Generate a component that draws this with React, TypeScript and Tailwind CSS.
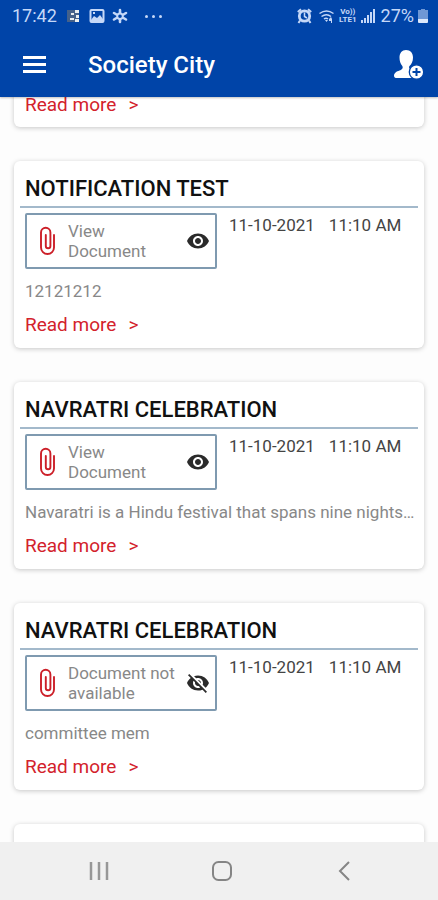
import React from "react";

type Notice = {
  title: string;
  date: string;
  time: string;
  text: string;
  hasDocument: boolean;
};

const notices: Notice[] = [
  { title: "NOTIFICATION TEST", date: "11-10-2021", time: "11:10 AM", text: "12121212", hasDocument: true },
  {
    title: "NAVRATRI CELEBRATION",
    date: "11-10-2021",
    time: "11:10 AM",
    text: "Navaratri is a Hindu festival that spans nine nights…",
    hasDocument: true,
  },
  { title: "NAVRATRI CELEBRATION", date: "11-10-2021", time: "11:10 AM", text: "committee mem", hasDocument: false },
];

const cardStyle = "bg-white shadow-[0_1px_5px_rgba(0,0,0,0.22)]";

function PaperclipIcon() {
  return (
    <svg className="h-[30px] w-[18px] shrink-0" viewBox="0 0 18 30" fill="none" stroke="#cc1f28" strokeWidth="1.900" strokeLinecap="round">
      <path d="M16 9v12.500a6.500 6.500 0 0 1-13 0V6.500a4.700 4.700 0 0 1 9.400 0v13.500a2.300 2.300 0 0 1-4.600 0V9" />
    </svg>
  );
}

function EyeIcon() {
  return (
    <svg className="size-6 shrink-0" viewBox="0 0 24 24" fill="#2b2b2b">
      <path d="M12 4.500C7 4.500 2.730 7.610 1 12c1.730 4.390 6 7.500 11 7.500s9.270-3.110 11-7.500c-1.730-4.390-6-7.500-11-7.500zM12 17c-2.760 0-5-2.240-5-5s2.240-5 5-5 5 2.240 5 5-2.240 5-5 5zm0-8c-1.660 0-3 1.340-3 3s1.340 3 3 3 3-1.340 3-3-1.340-3-3-3z" />
    </svg>
  );
}

function EyeOffIcon() {
  return (
    <svg className="size-6 shrink-0" viewBox="0 0 24 24" fill="#2b2b2b">
      <path d="M12 7c2.760 0 5 2.240 5 5 0 .65-.13 1.260-.36 1.830l2.920 2.920c1.510-1.260 2.700-2.890 3.430-4.750-1.730-4.390-6-7.500-11-7.500-1.400 0-2.740.25-3.980.7l2.160 2.160C10.740 7.130 11.350 7 12 7zM2 4.270l2.280 2.280.46.46C3.080 8.300 1.780 10.020 1 12c1.730 4.390 6 7.500 11 7.500 1.550 0 3.030-.3 4.380-.84l.42.42L19.730 22 21 20.730 3.270 3 2 4.270zM7.530 9.800l1.550 1.550c-.05.21-.08.43-.08.65 0 1.660 1.340 3 3 3 .22 0 .44-.03.65-.08l1.550 1.550c-.67.33-1.410.53-2.200.53-2.760 0-5-2.240-5-5 0-.79.2-1.530.53-2.200zm4.310-.78l3.150 3.150.02-.16c0-1.660-1.340-3-3-3l-.17.01z" />
    </svg>
  );
}

function ReadMore() {
  return (
    <a href="#" className="flex w-fit gap-3 text-[19px] leading-6 text-[#d3222c]">
      <span>Read more</span>
      <span>&gt;</span>
    </a>
  );
}

function NoticeCard({ notice }: { notice: Notice }) {
  return (
    <article className={`rounded-md px-1.5 pt-4 pb-[11px] ${cardStyle}`}>
      <h2 className="border-b-2 border-[#a3b9cb] px-[5px] pb-[5px] text-[22px] leading-6 font-medium text-[#111]">
        {notice.title}
      </h2>
      <div className="mt-[5px] flex items-start gap-3 px-[5px]">
        <button
          type="button"
          className="flex h-14 w-48 items-center rounded-xs border-2 border-[#7f9ab0] pr-[5px] pl-[11px] text-left text-[17px] leading-5 text-[#888]"
        >
          <PaperclipIcon />
          <span className="ml-3 flex-1">
            {notice.hasDocument ? "View" : "Document not"}
            <br />
            {notice.hasDocument ? "Document" : "available"}
          </span>
          {notice.hasDocument ? <EyeIcon /> : <EyeOffIcon />}
        </button>
        <p className="flex gap-3.5 pt-0.5 text-[17px] leading-5 text-[#444]">
          <span>{notice.date}</span>
          <span>{notice.time}</span>
        </p>
      </div>
      <p className="mt-3 truncate pl-[5px] text-[17px] leading-5 text-[#888]">{notice.text}</p>
      <div className="mt-3 px-[5px]">
        <ReadMore />
      </div>
    </article>
  );
}

function StatusBar() {
  return (
    <div className="flex h-8 items-center justify-between pr-2.5 pl-3 text-lg text-[#c5d8f8]">
      <div className="flex items-center">
        <span>17:42</span>
        <svg className="ml-2.5 h-4 w-[74px]" viewBox="0 0 74 16" fill="none" stroke="#c5d8f8">
          <path fill="#45618a" stroke="none" d="M0 2h12v12H0z" />
          <path fill="#e9eef0" stroke="none" d="M8 2h4v3H8zM9 7h3v3H9zM8 11h4v3H8zM4 5h3v2H4zM3 10h4v2H3z" />
          <rect x="23.500" y="2" width="13" height="12" rx="1" strokeWidth="2" />
          <path fill="#c5d8f8" stroke="none" d="M24 12l3-4 3 2 3-3 3 4v2H24zM26 4h2v2h-2z" />
          <path strokeWidth="2.600" strokeLinecap="round" d="M53 4.500V2M56.500 6.500L59 5M56.500 10L59 11.500M53 12V14M49.500 10L47 11.500M49.500 6.500L47 5" />
          <circle cx="53" cy="8.200" r="2.800" strokeWidth="2" />
        </svg>
        <span className="ml-1 flex gap-1">
          <i className="size-[3px] rounded-full bg-[#c5d8f8]" />
          <i className="size-[3px] rounded-full bg-[#c5d8f8]" />
          <i className="size-[3px] rounded-full bg-[#c5d8f8]" />
        </span>
      </div>
      <div className="flex items-center gap-1">
        <svg className="h-4 w-[38px]" viewBox="0 0 38 16" fill="none" stroke="#c5d8f8">
          <circle cx="7.500" cy="8" r="5.200" strokeWidth="2.800" />
          <path strokeWidth="1.500" d="M7.500 4.500V8.500L10 10" />
          <path strokeWidth="2" d="M.8 4L4 1.200M11 1.200L14.200 4M3 12.500L1.500 15M12 12.500L13.500 15" />
          <path strokeWidth="1.500" d="M22.500 5.500q7-5 14 0M24.500 8.500q5-3.500 9.500 0M27 11q2-1.500 4 0" />
          <path fill="#c5d8f8" stroke="none" d="M28 12h3l-1.500 2zM32 11l2-2 1 2v4h-1v-2h-2z" />
        </svg>
        <span className="flex flex-col text-center text-[8px] leading-[8px] font-bold">
          <span>Vo))</span>
          <span>LTE1</span>
        </span>
        <svg className="h-4 w-3.5" viewBox="0 0 14 16" fill="#c5d8f8">
          <path d="M0 12h2v3H0zM3 10h2v5H3zM6 7h2v8H6zM9 4h2v11H9zM12 1h2v14h-2z" />
        </svg>
        <span className="ml-0.5">27%</span>
        <svg className="h-4 w-2.5" viewBox="0 0 10 16">
          <path fill="#6f97d5" d="M3 1h4v1h3v10H0V2h3z" />
          <path fill="#dce8fb" d="M0 11h10v3a1 1 0 0 1-1 1H1a1 1 0 0 1-1-1z" />
        </svg>
      </div>
    </div>
  );
}

export default function App() {
  return (
    <div className="flex h-screen flex-col overflow-hidden bg-[#fdfdfd] font-[Roboto,sans-serif]">
      <header className="z-10 shrink-0 bg-[#0044a8] text-white shadow-[0_1px_2px_rgba(0,0,0,0.25)]">
        <StatusBar />
        <div className="flex h-[65px] items-center pr-3.5 pl-[23px]">
          <button type="button" aria-label="Menu" className="flex w-[23px] flex-col gap-1">
            <span className="h-[3px] bg-white" />
            <span className="h-[3px] bg-white" />
            <span className="h-[3px] bg-white" />
          </button>
          <h1 className="ml-[42px] flex-1 text-2xl font-medium">Society City</h1>
          <button type="button" aria-label="Add member">
            <svg className="h-8 w-[30px]" viewBox="0 0 30 32" fill="#fff">
              <path d="M12 1c4.500 0 7 3 7 7.500 0 4-1.500 6.500-3.500 8.500-.8.900-.5 2.500.8 3.200l3 1.800V29H3c-2 0-3-.8-3-2.300C0 24 2.500 22.500 5.500 21.500c2.500-.8 4-2.500 2.800-4.500C6.500 15 5.500 12 5.500 8.500 5.500 4 8 1 12 1z" />
              <circle cx="22.500" cy="23" r="7.200" stroke="#0044a8" strokeWidth="1.300" />
              <path d="M22.500 19v8M18.500 23h8" stroke="#0044a8" strokeWidth="2" />
            </svg>
          </button>
        </div>
      </header>

      <main className="flex min-h-0 flex-1 flex-col gap-[34px] overflow-hidden px-3.5">
        <article className={`-mt-1 rounded-b-md px-[11px] pb-2.5 ${cardStyle}`}>
          <ReadMore />
        </article>
        {notices.map((notice, i) => (
          <NoticeCard key={i} notice={notice} />
        ))}
        <article className={`min-h-8 flex-1 shrink-0 rounded-t-md ${cardStyle}`} />
      </main>

      <nav className="z-10 flex h-[58px] shrink-0 items-center justify-between bg-[#f0f0f0] pr-[82px] pl-[87px]">
        <button type="button" aria-label="Recent apps">
          <svg className="size-6" viewBox="0 0 24 24" stroke="#979797" strokeWidth="2.500">
            <path d="M4 3v18M12 3v18M20 3v18" />
          </svg>
        </button>
        <button type="button" aria-label="Home">
          <svg className="size-6" viewBox="0 0 24 24" fill="none" stroke="#858585" strokeWidth="2">
            <rect x="3" y="3" width="18" height="18" rx="5.500" />
          </svg>
        </button>
        <button type="button" aria-label="Back">
          <svg className="size-6" viewBox="0 0 24 24" fill="none" stroke="#858585" strokeWidth="2">
            <path d="M17 3L8 12l9 9" />
          </svg>
        </button>
      </nav>
    </div>
  );
}
